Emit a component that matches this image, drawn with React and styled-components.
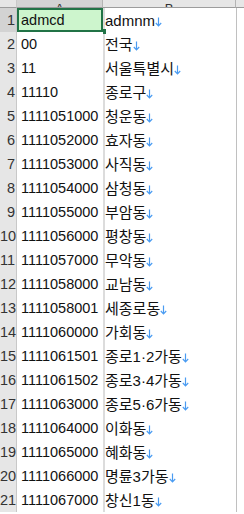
import React from 'react'
import { styled, createGlobalStyle } from 'styled-components'

const rows = [
  ['admcd', 'admnm'],
  ['00', '전국'],
  ['11', '서울특별시'],
  ['11110', '종로구'],
  ['1111051000', '청운동'],
  ['1111052000', '효자동'],
  ['1111053000', '사직동'],
  ['1111054000', '삼청동'],
  ['1111055000', '부암동'],
  ['1111056000', '평창동'],
  ['1111057000', '무악동'],
  ['1111058000', '교남동'],
  ['1111058001', '세종로동'],
  ['1111060000', '가회동'],
  ['1111061501', '종로1·2가동'],
  ['1111061502', '종로3·4가동'],
  ['1111063000', '종로5·6가동'],
  ['1111064000', '이화동'],
  ['1111065000', '혜화동'],
  ['1111066000', '명륜3가동'],
  ['1111067000', '창신1동'],
]

const Global = createGlobalStyle`
  html, body { margin: 0; padding: 0; background: #fff; }
  body { width: 244px; height: 514px; overflow: hidden; }
`

const LineFeed = () => (
  <Arrow width="7" height="10" viewBox="0 0 7 10">
    <path d="M3.5 0.5 V8.6 M0.8 6 L3.5 8.8 L6.2 6" fill="none" stroke="#4a9cf2" strokeWidth="1.2" />
  </Arrow>
)

const App = () => {
  return (
    <>
      <Global />
      <Sheet>
        <Corner />
        <ColHead selected><span>A</span></ColHead>
        <ColHead><span>B</span></ColHead>
        <ColHead last />
        {rows.map(([code, name], i) => (
          <React.Fragment key={i}>
            <RowHead selected={i === 0}>{i + 1}</RowHead>
            <CodeCell selected={i === 0}>
              {code}
              {i === 0 && <Handle />}
            </CodeCell>
            <NameCell>
              {name}
              <LineFeed />
            </NameCell>
            <Rest />
          </React.Fragment>
        ))}
      </Sheet>
    </>
  )
}

export default App

const Sheet = styled.div`
  display: grid;
  grid-template-columns: 17px 86px 133px 1fr;
  grid-template-rows: 8px;
  grid-auto-rows: 24px;
  width: 244px;
  font-family: "Liberation Sans", "Noto Sans CJK KR", sans-serif;
  font-size: 14.5px;
  color: #111;
`
const Corner = styled.div`
  background: #e6e6e6;
  border-bottom: 1px solid #9c9c9c;
  border-right: 1px solid #c8c8c8;
`
const ColHead = styled.div`
  background: ${p => (p.selected ? '#d3d3d3' : '#e6e6e6')};
  border-bottom: 1px solid #9c9c9c;
  border-right: ${p => (p.last ? 'none' : '1px solid #b4b4b4')};
  display: flex;
  justify-content: center;
  align-items: flex-end;
  overflow: hidden;
  color: #333;
  span {
    line-height: 14px;
    font-size: 13px;
    margin-bottom: -9px;
  }
`
const RowHead = styled.div`
  background: ${p => (p.selected ? '#d3d3d3' : '#e6e6e6')};
  border-right: 1px solid #c8c8c8;
  color: #333;
  text-align: right;
  padding-right: 1px;
  line-height: 25px;
  font-size: 14.5px;
`
const CodeCell = styled.div`
  position: relative;
  padding-left: 4px;
  line-height: 25px;
  white-space: nowrap;
  background: ${p => (p.selected ? '#cdf5cd' : '#fff')};
  box-shadow: ${p => (p.selected ? 'inset 0 0 0 2px #217346' : 'none')};
`
const Handle = styled.span`
  position: absolute;
  right: -3px;
  bottom: -2px;
  width: 5px;
  height: 5px;
  background: #217346;
`
const NameCell = styled.div`
  border-left: 2px solid #dcdcdc;
  line-height: 25px;
  white-space: nowrap;
  overflow: hidden;
  font-family: "Liberation Sans", "Noto Sans CJK KR", sans-serif;
  font-size: 15px;
  display: flex;
  align-items: center;
`
const Arrow = styled.svg`
  flex: none;
  margin-top: 3px;
`
const Rest = styled.div`
  border-left: 1px solid #c0c0c0;
`
